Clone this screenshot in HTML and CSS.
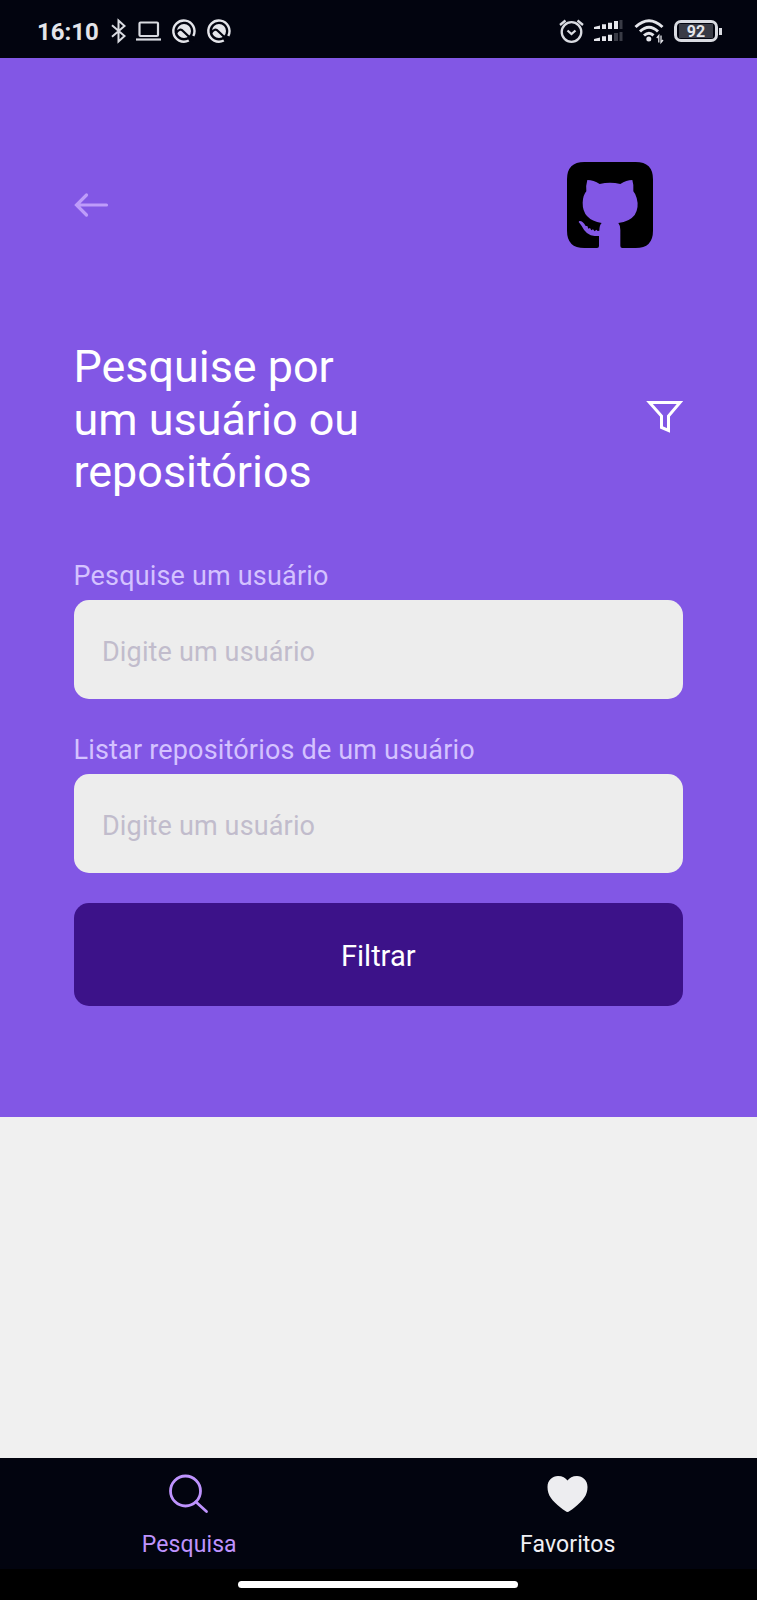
FILE: index.html
```html
<!DOCTYPE html>
<html lang="pt-BR">
<head>
<meta charset="utf-8">
<title>Pesquisa</title>
<link rel="stylesheet" href="styles.css">
</head>
<body>
<div class="app">
  <header class="status">
    <div class="status-left">
      <span class="time">16:10</span>
      <svg class="bluetooth" viewBox="0 0 15 24" width="15" height="24"><path d="M1 6.200 13.500 17 7.500 22.500V1.500L13.500 7 1 17.800"/></svg>
      <svg class="laptop" viewBox="0 0 25 20" width="25" height="20"><rect x="3.500" y="1.500" width="18.500" height="13.500" rx="1"/><path d="M0 18.500H25"/></svg>
      <svg class="badge-icon" viewBox="0 0 24 24" width="24" height="24"><path class="ring" d="M16.800 21.500A10.600 10.600 0 1 1 21.300 17"/><circle class="disc" cx="12" cy="12" r="7"/><path class="cut" d="M4 14Q8 8.500 11 12L21 21.500"/></svg>
      <svg class="badge-icon" viewBox="0 0 24 24" width="24" height="24"><path class="ring" d="M16.800 21.500A10.600 10.600 0 1 1 21.300 17"/><circle class="disc" cx="12" cy="12" r="7"/><path class="cut" d="M4 14Q8 8.500 11 12L21 21.500"/></svg>
    </div>
    <div class="status-right">
      <svg class="alarm" viewBox="0 0 25 24" width="25" height="24"><circle cx="12.500" cy="13" r="9.800"/><path d="M8.500 11.500 12.500 15 16.500 11.500M1 6 6.500 1.500M24 6 18.500 1.500"/></svg>
      <svg class="signal" viewBox="0 0 29 23" width="29" height="23">
        <path d="M0 7 6 5.500V9H0ZM8 4.200H12V9H8ZM14 2.700H18V9H14ZM20 1H24V9H20ZM0 19 6 17.500V21H0ZM8 16.200H12V21H8ZM14 14.700H18V21H14Z"/>
        <path class="dim" d="M25.500 0H28.500V9H25.500ZM20 13H24V21H20ZM25.500 12H28.500V21H25.500Z"/>
      </svg>
      <svg class="wifi" viewBox="0 0 30 24" width="30" height="24"><path d="M1.500 8Q15-4.500 28.500 8M6 12.500Q15 4 24 12.500M10 16.500Q15 12 19.500 16.300"/><circle cx="14.800" cy="20" r="2.500"/><path class="arrows" d="M24.800 23.500V16.500L22.800 19M27 16.500V23.500L29 21"/></svg>
      <div class="battery"><span class="battery-level">92</span></div>
    </div>
  </header>

  <main class="search">
    <div class="topbar">
      <svg class="back" viewBox="0 0 35 26" width="35" height="26"><path d="M12.500 3 2.500 13 12.500 23M2.500 13H32.500"/></svg>
      <svg class="logo" viewBox="51 36 258 258" width="86" height="86">
        <path d="M103 36H257Q309 36 309 88V242Q309 294 257 294H217Q211 294 211 288V240Q211 226 205 219Q239 215 254 195Q268 173 260 144Q257 132 250 124Q252 106 247 90Q229 90 211 102Q180 95 149 102Q131 90 112 90Q107 107 109 124Q99 135 98 158Q97 209 155 219Q148 226 148 242L143 243 139 239 134 244 129 238 124 241 120 234 115 236 112 228 107 228Q98 212 88 213L86 216Q91 222 95 228Q109 257 134 258H147V288Q147 294 141 294H103Q51 294 51 242V88Q51 36 103 36Z"/>
      </svg>
    </div>
    <div class="heading">
      <h1>Pesquise por<br>um usuário ou<br>repositórios</h1>
      <svg class="funnel" viewBox="0 0 36 34" width="36" height="34"><path d="M2.500 2.500H33L21.500 16V30.500L14.500 27.500V16Z"/></svg>
    </div>
    <form class="form">
      <label for="user">Pesquise um usuário</label>
      <input id="user" type="text" placeholder="Digite um usuário">
      <label for="repos">Listar repositórios de um usuário</label>
      <input id="repos" type="text" placeholder="Digite um usuário">
      <button type="button">Filtrar</button>
    </form>
  </main>

  <section class="results"></section>

  <nav class="tabs">
    <a class="tab active">
      <svg class="lens" viewBox="0 0 40 40" width="40" height="40"><circle cx="16.500" cy="17" r="15"/><path d="M27 28 37.500 37.500"/></svg>
      <span>Pesquisa</span>
    </a>
    <a class="tab">
      <svg class="heart" viewBox="0 0 40 40" width="40" height="40"><path d="M19.500 38Q18 37.800 12.500 33.500C4 26.500-.500 21.500-.500 13C-.500 6 4.500 2 10 2C14.500 2 17.500 4 19.500 6.500C21.500 4 24.500 2 29 2C34.500 2 39.500 6 39.500 13C39.500 21.500 35 26.500 26.500 33.500Q21 37.800 19.500 38Z"/></svg>
      <span>Favoritos</span>
    </a>
  </nav>
  <footer class="gesture"><div class="handle"></div></footer>
</div>
</body>
</html>
```
FILE: styles.css
```css
* { box-sizing: border-box; }
body { margin: 0; font-family: Roboto, sans-serif; background: #f0f0f0; }
svg { display: block; flex: none; fill: none; overflow: visible; }
.app { display: flex; flex-direction: column; width: 757px; height: 1600px; }

.status { height: 57.500px; flex: none; display: flex; justify-content: space-between; padding: 5px 35px 0 37px; background: #02040f; color: #e4e5ea; }
.status-left, .status-right { display: flex; align-items: center; }
.time { width: 73.500px; padding-top: 1px; font-size: 24px; font-weight: 700; }
.bluetooth { stroke: #d9dbe1; stroke-width: 2; }
.laptop { margin-left: 10px; stroke: #d9dbe1; stroke-width: 2.200; }
.badge-icon { margin-left: 11px; }
.ring { stroke: #e4e5ea; stroke-width: 2.400; }
.disc { fill: #e4e5ea; }
.cut { stroke: #02040f; stroke-width: 2.200; }
.alarm { stroke: #d9dbe1; stroke-width: 2.300; }
.signal { margin-left: 10px; fill: #e4e5ea; }
.signal .dim { fill: #393b45; }
.wifi { margin-left: 11px; stroke: #e4e5ea; stroke-width: 3; }
.wifi circle { fill: #e4e5ea; stroke: none; }
.wifi .arrows { stroke-width: 1.300; }
.battery { position: relative; width: 44px; height: 22px; margin: 0 4px 0 10px; padding: 1px 2px; border: 3px solid #d9dbe1; border-radius: 7px; }
.battery::after { content: ""; position: absolute; right: -7px; top: 5px; width: 3px; height: 7px; background: #d9dbe1; }
.battery-level { display: block; height: 14px; line-height: 15px; background: #393b45; font-size: 16px; font-weight: 700; text-align: center; }

.search { height: 1059.500px; flex: none; padding: 104.500px 74px 0 73.500px; background: #8257e5; }
.topbar { display: flex; align-items: center; justify-content: space-between; height: 86px; padding-right: 30px; }
.back { stroke: #be9cfa; stroke-width: 3.200; stroke-linecap: round; }
.logo { fill: #000; }
.heading { display: flex; justify-content: space-between; align-items: flex-start; margin-top: 93px; }
h1 { margin: 0; font-size: 44.900px; font-weight: 400; line-height: 52.600px; color: #fff; }
.funnel { margin: 59px 0 0; stroke: #fff; stroke-width: 3; stroke-linejoin: miter; }

.form { display: flex; flex-direction: column; padding-top: 60px; }
label { height: 41px; padding-top: 1px; font-size: 27px; line-height: 32px; letter-spacing: 0.180px; color: #d4c2ff; }
input { width: 609.500px; height: 99.500px; margin: 0 0 33.500px; padding: 4px 28.500px 0; border: 0; border-radius: 15px; background: #ededed; font: 27px Roboto, sans-serif; letter-spacing: 0.150px; }
input::placeholder { color: #c1bccc; opacity: 1; }
button { width: 609.500px; height: 103px; margin-top: -4px; padding: 4px 0 0; border: 0; border-radius: 15px; background: #3c1289; color: #fff; font: 29px Roboto, sans-serif; }

.results { flex: 1; background: #f0f0f0; }
.tabs { height: 111px; flex: none; display: flex; background: #02040f; }
.tab { flex: 1; display: flex; flex-direction: column; align-items: center; padding-top: 16px; font-size: 23px; line-height: 28px; letter-spacing: 0.100px; color: #f0f0f5; }
.tab span { margin-top: 17px; }
.active { color: #be93fd; }
.lens { stroke: #be93fd; stroke-width: 2.800; stroke-linecap: round; }
.heart { fill: #ededf0; }
.gesture { height: 31px; flex: none; display: flex; justify-content: center; padding: 12px 1px 0 0; background: #000; }
.handle { width: 280px; height: 7px; border-radius: 4px; background: #fff; }
```
